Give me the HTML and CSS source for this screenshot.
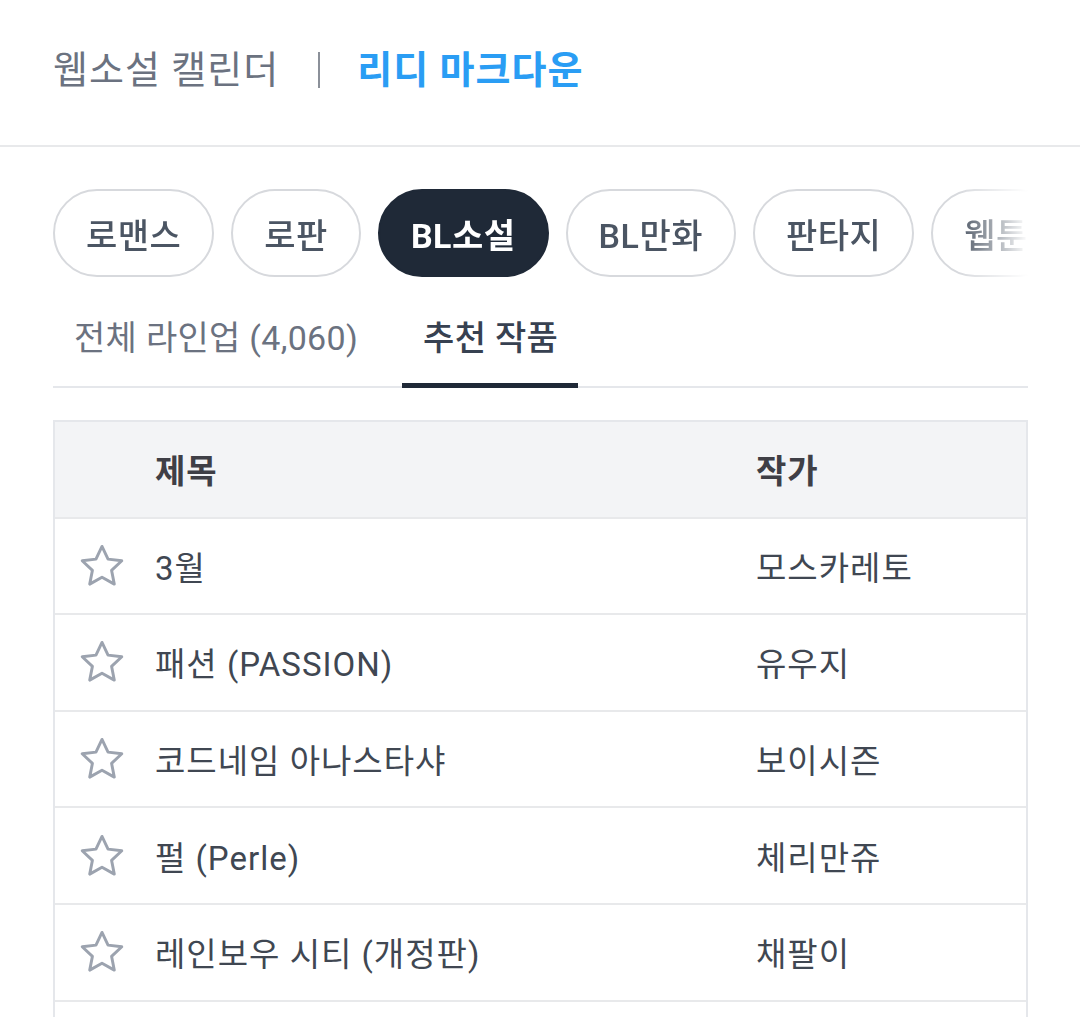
FILE: index.html
```html
<!DOCTYPE html>
<html lang="ko">
<head>
<meta charset="utf-8">
<title>리디 마크다운</title>
<link rel="stylesheet" href="styles.css">
</head>
<body>
<header class="top">
  <span class="top-link">웹소설 캘린더</span>
  <span class="top-sep"></span>
  <span class="top-current">리디 마크다운</span>
</header>
<main class="content">
  <div class="chips-wrap">
    <div class="chips">
      <span class="chip">로맨스</span>
      <span class="chip">로판</span>
      <span class="chip chip-active">BL소설</span>
      <span class="chip">BL만화</span>
      <span class="chip">판타지</span>
      <span class="chip">웹툰</span>
      <span class="chip">만화</span>
    </div>
  </div>
  <nav class="tabs">
    <span class="tab">전체 라인업 (4,060)</span>
    <span class="tab tab-active">추천 작품</span>
  </nav>
  <div class="table">
    <div class="row row-head">
      <span class="cell-star"></span>
      <span class="cell-title">제목</span>
      <span class="cell-author">작가</span>
    </div>
    <div class="row">
      <span class="cell-star"><svg class="star" viewBox="0 0 24 24"><path d="M12 2.6l2.9 6.1 6.6.8-4.9 4.6 1.3 6.6L12 17.4l-5.9 3.3 1.3-6.6-4.9-4.6 6.6-.8z"/></svg></span>
      <span class="cell-title">3월</span>
      <span class="cell-author">모스카레토</span>
    </div>
    <div class="row">
      <span class="cell-star"><svg class="star" viewBox="0 0 24 24"><path d="M12 2.6l2.9 6.1 6.6.8-4.9 4.6 1.3 6.6L12 17.4l-5.9 3.3 1.3-6.6-4.9-4.6 6.6-.8z"/></svg></span>
      <span class="cell-title">패션 (PASSION)</span>
      <span class="cell-author">유우지</span>
    </div>
    <div class="row">
      <span class="cell-star"><svg class="star" viewBox="0 0 24 24"><path d="M12 2.6l2.9 6.1 6.6.8-4.9 4.6 1.3 6.6L12 17.4l-5.9 3.3 1.3-6.6-4.9-4.6 6.6-.8z"/></svg></span>
      <span class="cell-title">코드네임 아나스타샤</span>
      <span class="cell-author">보이시즌</span>
    </div>
    <div class="row">
      <span class="cell-star"><svg class="star" viewBox="0 0 24 24"><path d="M12 2.6l2.9 6.1 6.6.8-4.9 4.6 1.3 6.6L12 17.4l-5.9 3.3 1.3-6.6-4.9-4.6 6.6-.8z"/></svg></span>
      <span class="cell-title">펄 (Perle)</span>
      <span class="cell-author">체리만쥬</span>
    </div>
    <div class="row">
      <span class="cell-star"><svg class="star" viewBox="0 0 24 24"><path d="M12 2.6l2.9 6.1 6.6.8-4.9 4.6 1.3 6.6L12 17.4l-5.9 3.3 1.3-6.6-4.9-4.6 6.6-.8z"/></svg></span>
      <span class="cell-title">레인보우 시티 (개정판)</span>
      <span class="cell-author">채팔이</span>
    </div>
    <div class="row">
      <span class="cell-star"><svg class="star" viewBox="0 0 24 24"><path d="M12 2.6l2.9 6.1 6.6.8-4.9 4.6 1.3 6.6L12 17.4l-5.9 3.3 1.3-6.6-4.9-4.6 6.6-.8z"/></svg></span>
      <span class="cell-title">시맨틱 에러</span>
      <span class="cell-author">저수리</span>
    </div>
  </div>
</main>
</body>
</html>
```

FILE: styles.css
```css
* { box-sizing: border-box; }
html, body { margin: 0; padding: 0; background: #fff; }
body {
  font-family: Roboto, "Noto Sans CJK KR", "Noto Sans", sans-serif;
  color: #374151;
  overflow: hidden;
}
.top {
  height: 147px;
  display: flex;
  align-items: center;
  padding: 0 53px 6px;
  border-bottom: 2px solid #e8e9eb;
  font-size: 38px;
  letter-spacing: 1px;
  line-height: 1;
}
.top-link { color: #6b7280; }
.top-sep {
  width: 2px;
  height: 36px;
  background: #8b9099;
  margin: 0 37px 0 39px;
}
.top-current { color: #2a9df4; font-weight: 700; }

.content { padding: 42px 52px 0 53px; }

.chips-wrap {
  overflow: hidden;
  -webkit-mask-image: linear-gradient(to right, #000 0, #000 calc(100% - 70px), transparent 100%);
  mask-image: linear-gradient(to right, #000 0, #000 calc(100% - 70px), transparent 100%);
}
.chips {
  display: flex;
  gap: 17px;
  white-space: nowrap;
}
.chip {
  flex: none;
  height: 88px;
  padding: 0 31px;
  border: 2px solid #d7d9dd;
  border-radius: 44px;
  display: flex;
  align-items: center;
  font-size: 34px;
  letter-spacing: 0.5px;
  font-weight: 500;
  color: #4b5563;
}
.chip-active {
  background: #1f2937;
  border-color: #1f2937;
  color: #fff;
  font-weight: 700;
}

.tabs {
  display: flex;
  gap: 24px;
  border-bottom: 2px solid #e5e7eb;
}
.tab {
  height: 111px;
  padding: 10px 20px 0 21px;
  display: flex;
  align-items: center;
  font-size: 34px;
  letter-spacing: 0.3px;
  color: #6b7280;
  border-bottom: 5px solid transparent;
  margin-bottom: -2px;
}
.tab-active {
  color: #374151;
  font-weight: 500;
  border-bottom-color: #1f2937;
}

.table {
  margin-top: 32px;
  border: 2px solid #e5e7eb;
  border-bottom: none;
}
.row {
  display: grid;
  grid-template-columns: 98px 1fr 270px;
  align-items: center;
  height: 96.6px;
  border-bottom: 2px solid #e8e9eb;
  font-size: 33px;
  letter-spacing: 1px;
  color: #404752;
}
.row-head {
  background: #f3f4f6;
  font-weight: 700;
  color: #3f3f46;
}
.cell-star {
  display: flex;
  align-items: center;
  padding-left: 22px;
}
.star {
  width: 50px;
  height: 50px;
  fill: none;
  stroke: #9ca3af;
  stroke-width: 1.4;
  stroke-linejoin: round;
}
.cell-title { padding-left: 2px; }
```
